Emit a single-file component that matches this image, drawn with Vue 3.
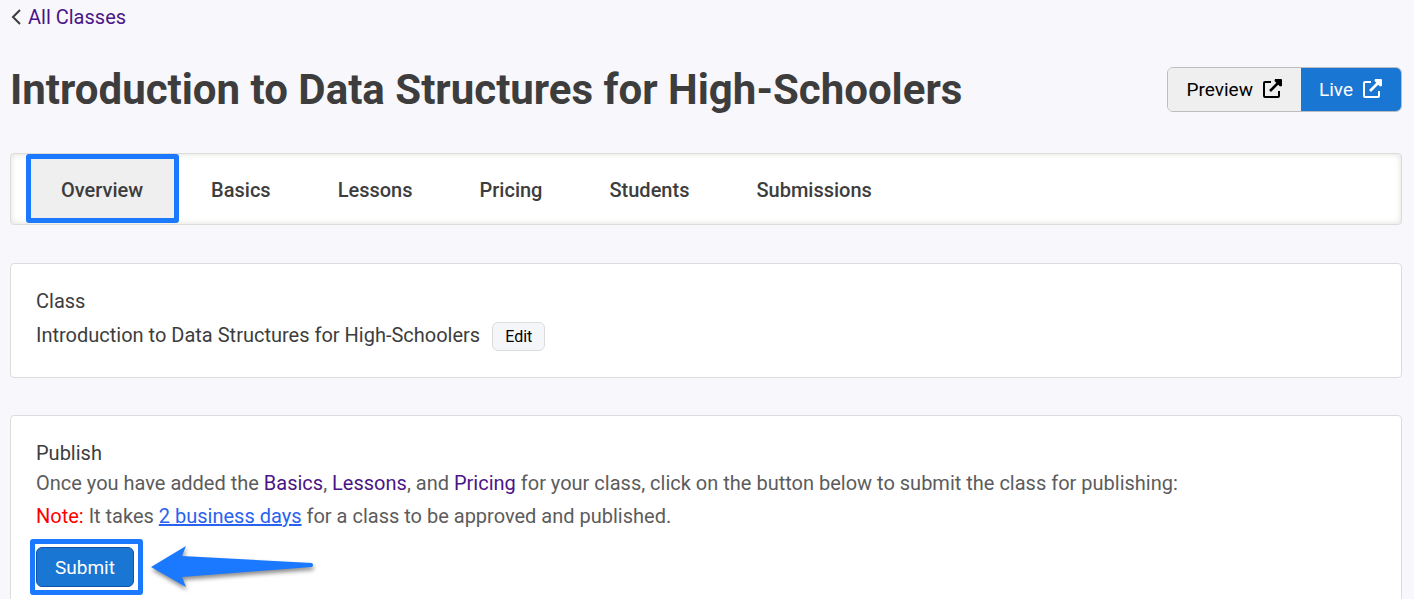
<script setup>
const tabs = ['Overview', 'Basics', 'Lessons', 'Pricing', 'Students', 'Submissions']
const actions = [
  { label: 'Preview', kind: 'preview' },
  { label: 'Live', kind: 'live' },
]
</script>

<template>
  <main class="page">
    <nav class="back">
      <svg class="chevron" viewBox="0 0 10 16" aria-hidden="true">
        <path d="M9 1L2 8l7 7" fill="none" stroke="#3d3d3d" stroke-width="2" />
      </svg>
      <a href="#classes">All Classes</a>
    </nav>

    <header class="heading">
      <h1>Introduction to Data Structures for High-Schoolers</h1>
      <div class="actions">
        <button v-for="a in actions" :key="a.kind" type="button" :class="['action', a.kind]">
          {{ a.label }}
          <svg viewBox="0 0 20 20" aria-hidden="true">
            <path d="M9 3H3Q2 3 2 4V17Q2 18 3 18H16Q17 18 17 17V12" fill="none" stroke="currentColor" stroke-width="2" />
            <path d="M8 12L16 4" fill="none" stroke="currentColor" stroke-width="2.600" />
            <path d="M13 0H19Q20 0 20 1V7L18 7.500L12.500 2Z" fill="currentColor" />
          </svg>
        </button>
      </div>
    </header>

    <nav class="tabs">
      <a v-for="(tab, i) in tabs" :key="tab" href="#" :class="['tab', { active: i === 0 }]">{{ tab }}</a>
    </nav>

    <section class="card">
      <h2>Class</h2>
      <div class="class-row">
        <span>Introduction to Data Structures for High-Schoolers</span>
        <button type="button" class="edit">Edit</button>
      </div>
    </section>

    <section class="card publish">
      <h2>Publish</h2>
      <p>
        Once you have added the <a href="#basics">Basics</a>, <a href="#lessons">Lessons</a>, and
        <a href="#pricing">Pricing</a> for your class, click on the button below to submit the class for publishing:
      </p>
      <p class="note">
        <strong>Note:</strong> It takes <a href="#timing" class="timing">2 business days</a> for a class to be approved and published.
      </p>
      <div class="submit-row">
        <div class="highlight">
          <button type="button" class="submit">Submit</button>
        </div>
        <svg class="arrow" viewBox="0 0 170 50" aria-hidden="true">
          <path d="M2 25L37 4L33 14L163 21Q165 23 163 25L33 35L37 45Z" fill="#1a79ff" />
        </svg>
      </div>
    </section>
  </main>
</template>

<style>
body {
  background: #f8f7fc;
}
</style>

<style scoped>
.page {
  box-sizing: border-box;
  height: 100vh;
  overflow: hidden;
  padding: 4px 12px 0 10px;
  font-family: Roboto, "Liberation Sans", sans-serif;
  font-size: 20px;
  line-height: 26px;
  color: #3d3d3d;
}
a {
  color: #4b1587;
  text-decoration: none;
}
h1, h2, p {
  margin: 0;
}
button {
  font-family: inherit;
  cursor: pointer;
}
.back {
  display: flex;
  align-items: center;
  gap: 7px;
}
.chevron {
  width: 10px;
  height: 16px;
  margin-left: 1px;
}
.heading {
  display: flex;
  align-items: center;
  justify-content: space-between;
  margin-top: 32px;
}
h1 {
  padding-top: 2px;
  font-size: 42px;
  line-height: 52px;
  font-weight: 700;
}
.actions {
  display: flex;
  box-sizing: border-box;
  height: 45px;
  border: 1px solid #bdbdc1;
  border-radius: 6px;
  overflow: hidden;
}
.action {
  display: flex;
  align-items: center;
  gap: 9px;
  border: 0;
  padding: 0 19px 0 18px;
  font-size: 19px;
}
.action svg {
  width: 20px;
  height: 20px;
}
.preview {
  padding-left: 19px;
  color: #000;
  background: #efefef;
}
.live {
  color: #fff;
  background: #1976d2;
}
.tabs {
  display: flex;
  gap: 1px;
  box-sizing: border-box;
  height: 72px;
  margin-top: 37px;
  padding-left: 15px;
  background: #fff;
  border: 1px solid #dcdcda;
  border-radius: 4px;
  box-shadow: inset 0 0 6px #dededa;
}
.tab {
  display: flex;
  align-items: center;
  box-sizing: border-box;
  padding: 2px 33px 0;
  color: #3d3d3d;
  font-weight: 500;
}
.tab.active {
  padding: 2px 31px 0 30px;
  border: 5px solid #1a79ff;
  border-radius: 3px;
  background: #efefef;
  margin-right: -2px;
  margin-bottom: 1px;
}
.card {
  margin-top: 38px;
  padding: 24px 25px 26px;
  background: #fff;
  border: 1px solid #dcdcdc;
  border-radius: 4px;
}
h2 {
  font-size: 20px;
  line-height: 26px;
  font-weight: 400;
}
.class-row {
  display: flex;
  align-items: flex-start;
  gap: 12px;
  margin-top: 8px;
}
.edit {
  box-sizing: border-box;
  height: 29px;
  padding: 0 12px;
  font-size: 16px;
  color: #000;
  background: #f5f6f9;
  border: 1px solid #dcdcda;
  border-radius: 6px;
}
.publish {
  margin-top: 37px;
  padding-bottom: 40px;
}
.publish p {
  margin-top: 4px;
  color: #5c5c5c;
}
.publish .note {
  margin-top: 7px;
}
.note strong {
  font-weight: 400;
  color: #f00;
}
.note .timing {
  color: #2962f0;
  text-decoration: underline;
}
.submit-row {
  display: flex;
  align-items: center;
  gap: 6px;
  margin: 10px 0 0 -6px;
}
.highlight {
  padding: 3px 4px 3px 1px;
  border: 5px solid #1a79ff;
  border-radius: 3px;
}
.highlight .submit {
  display: block;
  height: 40px;
  padding: 0 18px;
  font-size: 19px;
  color: #fff;
  background: #1976d2;
  border: 1px solid #1252a8;
  border-radius: 6px;
}
.arrow {
  width: 170px;
  height: 50px;
  filter: drop-shadow(1px 3px 2px rgba(0, 0, 0, 0.45));
}
</style>
